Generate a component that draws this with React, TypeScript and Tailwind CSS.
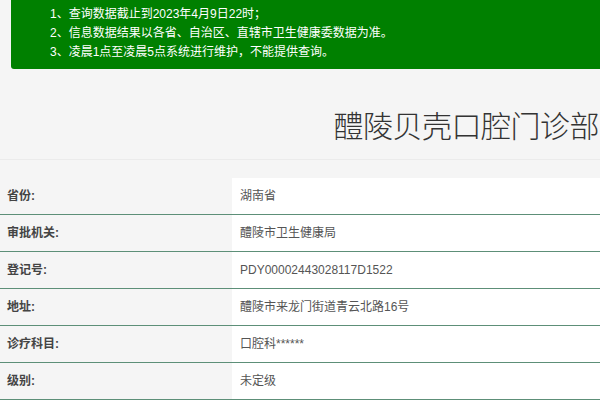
const rows = [
  { label: '省份:', value: '湖南省' },
  { label: '审批机关:', value: '醴陵市卫生健康局' },
  { label: '登记号:', value: 'PDY00002443028117D1522' },
  { label: '地址:', value: '醴陵市来龙门街道青云北路16号' },
  { label: '诊疗科目:', value: '口腔科******' },
  { label: '级别:', value: '未定级' },
];

export default function App() {
  return (
    <div
      className="w-[600px] h-[400px] overflow-hidden bg-[#f5f5f5] text-[#333]"
      style={{ fontFamily: '"Liberation Sans", "Noto Sans CJK SC", sans-serif' }}
    >
      {/* Notice */}
      <div className="ml-[11px] h-[69px] bg-[#008000] rounded-bl-[3px] pl-[39px] pt-[5px] text-white text-[12px] leading-[19px]">
        <p>1、查询数据截止到2023年4月9日22时；</p>
        <p>2、信息数据结果以各省、自治区、直辖市卫生健康委数据为准。</p>
        <p>3、凌晨1点至凌晨5点系统进行维护，不能提供查询。</p>
      </div>

      {/* Title */}
      <div className="h-[91px] border-b border-[#ebebeb] flex items-center justify-end pr-[1px] pt-[24px]">
        <h1 className="text-[30px] font-light text-[#333] tracking-[-0.5px]">醴陵贝壳口腔门诊部</h1>
      </div>

      {/* Details table */}
      <div className="mt-[18px]">
        {rows.map((row) => (
          <div key={row.label} className="flex h-[37px] border-b border-[#5d8f78] text-[12px]">
            <div className="w-[232px] shrink-0 bg-[#f5f5f5] flex items-center pl-[7px] font-bold text-[#444]">
              {row.label}
            </div>
            <div className="flex-1 bg-white flex items-center pl-[8px] text-[#555]">{row.value}</div>
          </div>
        ))}
      </div>
    </div>
  );
}
